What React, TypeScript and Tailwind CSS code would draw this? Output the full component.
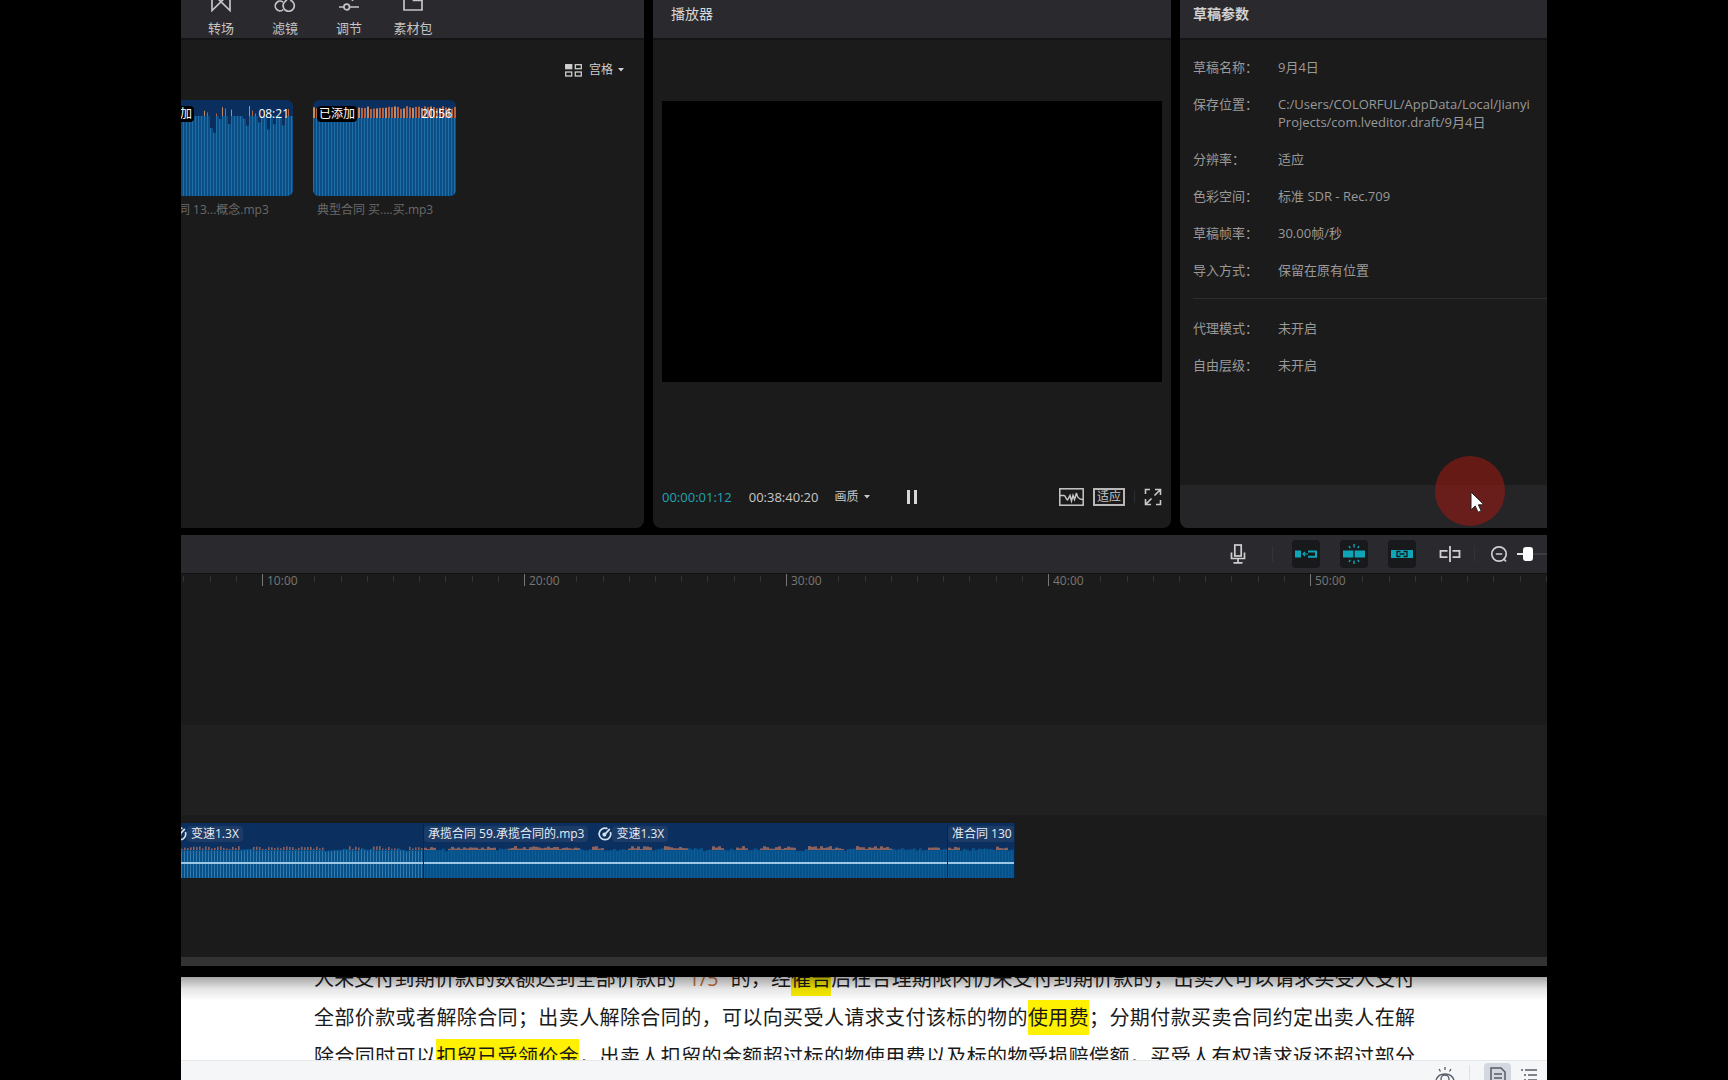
import React from 'react';

/** Draft settings listed in the right panel */
const draftInfo = [
  { label: '草稿名称：', value: ['9月4日'] },
  {
    label: '保存位置：',
    value: ['C:/Users/COLORFUL/AppData/Local/Jianyi', 'Projects/com.lveditor.draft/9月4日']
  },
  { label: '分辨率：', value: ['适应'] },
  { label: '色彩空间：', value: ['标准 SDR - Rec.709'] },
  { label: '草稿帧率：', value: ['30.00帧/秒'] },
  { label: '导入方式：', value: ['保留在原有位置'] }
];

const draftModes = [
  { label: '代理模式：', value: ['未开启'] },
  { label: '自由层级：', value: ['未开启'] }
];

const rulerMarks = ['00:00', '10:00', '20:00', '30:00', '40:00', '50:00'];

// Stable pseudo random value between 0 and 1
const noise = (n: number) => {
  const v = Math.sin(n * 12.9898 + 4.13) * 43758.5453;
  return v - Math.floor(v);
};

const Caret: React.FC = () => (
  <svg width="6" height="4" viewBox="0 0 6 4" fill="currentColor">
    <path d="M0 0h6L3 3.6z" />
  </svg>
);

interface ToolTabProps {
  label: string;
  children: React.ReactNode;
}

const ToolTab: React.FC<ToolTabProps> = ({ label, children }) => (
  <button className="flex w-16 flex-col items-center gap-[6px] text-[13px] leading-5 text-[#c4c4c6]">
    <svg width="22" height="22" viewBox="0 0 22 22" fill="none" stroke="currentColor" strokeWidth="1.7">
      {children}
    </svg>
    {label}
  </button>
);

interface MediaCardProps {
  title: string;
  duration: string;
  loud?: boolean;
  seed: number;
}

/**
 * Audio thumbnail: navy background, blue bars and clipped peaks in orange
 */
const MediaCard: React.FC<MediaCardProps> = ({ title, duration, loud, seed }) => (
  <div className="w-[143px] shrink-0">
    <div className="relative h-24 overflow-hidden rounded-md bg-[#0a2f5f]">
      <svg className="absolute inset-0" width="143" height="96" viewBox="0 0 143 96">
        {Array.from({ length: 48 }, (_, i) => {
          const r = noise(i + seed);
          const peak = loud ? 6 + r * 3 : r > 0.62 ? 5 + noise(i * 3 + seed) * 9 : 16;
          const top = loud ? 18 : r < 0.28 ? 18 + (0.28 - r) * 55 : 16;
          return (
            <g key={i}>
              {(loud || r > 0.62) && (
                <rect x={i * 3} y={peak} width={loud ? 2 : 1} height={20 - peak} fill={i % 3 ? '#b4623f' : '#c08a66'} />
              )}
              <rect x={i * 3} y={top} width="3" height={96 - top} fill="#0c4d84" />
              <rect x={i * 3} y={top} width="1" height={96 - top} fill="#1e6fa9" />
            </g>
          );
        })}
      </svg>
      <div className="relative flex items-center justify-between px-1 pt-[6px] text-[12px] leading-4 text-white">
        <span className="rounded-sm bg-black px-[2px]">已添加</span>
        <span>{duration}</span>
      </div>
    </div>
    <div className="px-1 pt-[5px] text-[12px] leading-[18px] text-[#6a6a6a]">{title}</div>
  </div>
);

const SpeedIcon: React.FC = () => (
  <svg className="shrink-0" width="14" height="14" viewBox="0 0 14 14" fill="none" stroke="#d5e0ee" strokeWidth="1.7" strokeLinecap="round">
    <path d="M8.8 1.4A5.8 5.8 0 1 0 12.6 5.6" />
    <path d="M6.6 7.6L11.4 2.4" />
    <circle cx="6.4" cy="7.6" r="1.2" fill="#d5e0ee" />
  </svg>
);

const ClipLabel: React.FC<{ children: React.ReactNode }> = ({ children }) => (
  <span className="shrink-0 whitespace-nowrap rounded-sm bg-[#1d3b67] px-1">{children}</span>
);

interface ClipProps {
  width: string;
  count: number;
  seed: number;
  striped?: boolean;
  children: React.ReactNode;
}

const Clip: React.FC<ClipProps> = ({ width, count, seed, striped, children }) => (
  <div className={`${width} h-[55px] shrink-0 overflow-hidden border-r border-[#0a2647] bg-[#0b2f5f]`}>
    <div className="flex h-[22px] items-center text-[12px] leading-4 text-[#e6edf5]">{children}</div>
    <svg className="block" width={count * 3} height="33" viewBox={`0 0 ${count * 3} 33`}>
      {Array.from({ length: count }, (_, i) => {
        const hot = noise(Math.floor(i / 4) + seed) > 0.35;
        const top = hot ? 5 : 3 + noise(i + seed) * 3;
        return (
          <g key={i}>
            {hot && <rect x={i * 3} y={1 + noise(i * 7 + seed) * 3} width={striped ? 1.6 : 3} height="6" fill="#8a6360" />}
            <rect x={i * 3} y={top} width="3" height={33 - top} fill="#07518a" />
            <rect x={i * 3} y={top + 1} width="1" height={33 - top} fill={striped ? '#3577a8' : '#0f5d97'} />
          </g>
        );
      })}
      <rect x="0" y="17" width={count * 3} height="2" fill="#9cc8e6" />
    </svg>
  </div>
);

const InfoRow: React.FC<{ label: string; value: string[] }> = ({ label, value }) => (
  <div className="flex">
    <dt className="w-[85px] shrink-0">{label}</dt>
    <dd className="whitespace-nowrap">
      {value.map((line) => (
        <div key={line}>{line}</div>
      ))}
    </dd>
  </div>
);

const Mark: React.FC<{ children: React.ReactNode }> = ({ children }) => (
  <mark className="bg-[#fff100] py-1 text-inherit">{children}</mark>
);

const MediaPanel: React.FC = () => (
  <section className="flex min-w-0 flex-col overflow-hidden rounded-br-lg bg-[#1b1b1b]">
    <div className="flex h-10 shrink-0 items-end overflow-hidden border-b-2 border-[#141415] bg-[#2a2a2e] pl-2">
      <ToolTab label="转场">
        <path d="M2 3v17.5L20 3v17.5L2 3" />
      </ToolTab>
      <ToolTab label="滤镜">
        <path d="M9 12.200A4.800 4.800 0 1 0 9.300 19.500" />
        <path d="M16.200 10.300A5.600 5.600 0 1 1 11.200 11.300L14.500 8" />
      </ToolTab>
      <ToolTab label="调节">
        <path d="M1 17h5M11.500 17H21M1 7.500h11M14.500 7v4" />
        <circle cx="8.700" cy="17" r="2.800" />
      </ToolTab>
      <ToolTab label="素材包">
        <path d="M2 3h9.500v7.500h8.500v9.500H2z" />
        <path d="M11.500 3h8.500v7.500" />
      </ToolTab>
    </div>
    <div className="flex justify-end px-5 pt-5">
      <button className="flex items-center text-[12px] leading-5 text-[#cfcfcf]">
        <svg width="17" height="13" viewBox="0 0 17 13" fill="none" stroke="currentColor" strokeWidth="1.3">
          <rect x="0.7" y="0.7" width="6" height="4" fill="currentColor" />
          <rect x="10.300" y="0.700" width="6" height="4" />
          <rect x="0.700" y="8" width="6" height="4" />
          <rect x="10.300" y="8" width="6" height="4" />
        </svg>
        <span className="mr-[5px] ml-[7px]">宫格</span>
        <Caret />
      </button>
    </div>
    <div className="-ml-[31px] flex gap-5 pt-5">
      <MediaCard title="准合同 13...概念.mp3" duration="08:21" seed={3} />
      <MediaCard title="典型合同 买....买.mp3" duration="20:56" seed={40} loud />
    </div>
  </section>
);

const PlayerPanel: React.FC = () => (
  <section className="flex min-w-0 flex-col overflow-hidden rounded-b-lg bg-[#1b1b1b]">
    <h2 className="h-10 shrink-0 border-b-2 border-[#141415] bg-[#2a2a2e] px-[18px] pt-1 text-[14px] leading-5 text-[#d6d6d8]">
      播放器
    </h2>
    <div className="mx-[9px] mt-[61px] h-[281px] bg-black" />
    <div className="grid grid-cols-[1fr_auto_1fr] items-center px-[9px] pt-[105px] pb-[21px] text-[13px] leading-5 text-[#c8c8c8]">
      <div className="flex items-center">
        <span className="text-[#1fa3b3]">00:00:01:12</span>
        <span className="ml-[17px]">00:38:40:20</span>
        <button className="ml-4 flex items-center gap-[6px] text-[12px]">
          画质
          <Caret />
        </button>
      </div>
      <button aria-label="暂停" className="flex gap-1">
        <span className="h-[14px] w-[3px] bg-[#d6d6d6]" />
        <span className="h-[14px] w-[3px] bg-[#d6d6d6]" />
      </button>
      <div className="flex items-center justify-end">
        <button aria-label="示波器">
          <svg width="25" height="18" viewBox="0 0 25 18" fill="none" stroke="currentColor" strokeWidth="1.5">
            <rect x="0.8" y="0.8" width="23.400" height="16.400" />
            <path d="M1 7.500h4c2 0 2 4.500 3.500 4.500L11 7.500l1.500 5.500 1.500-5.500 1.500 4L17.500 5c.5 4.500 2 6.500 6.500 6.500" />
          </svg>
        </button>
        <button className="ml-[9px] border-2 border-[#b8b8b8] px-[2px] text-[12px] leading-[14px]">适应</button>
        <span className="mx-[9px] h-3 w-px bg-[#2c2c2c]" />
        <button aria-label="全屏">
          <svg width="18" height="18" viewBox="0 0 18 18" fill="none" stroke="currentColor" strokeWidth="1.6">
            <path d="M1.500 6V1.500H6M11 1.500h5.500V7M16.500 12v4.500H12M7 16.500H1.500V11M16 2l-5.500 5.500M2 16l5.500-5.500" />
          </svg>
        </button>
      </div>
    </div>
  </section>
);

const DraftPanel: React.FC = () => (
  <section className="relative flex min-w-0 flex-col overflow-hidden rounded-bl-lg bg-[#1b1b1b]">
    <h2 className="h-10 shrink-0 border-b-2 border-[#141415] bg-[#2a2a2e] px-[13px] pt-1 text-[14px] leading-5 font-bold text-[#d0d0d2]">
      草稿参数
    </h2>
    <div className="flex-1 pl-[13px] pt-[18px] text-[13px] leading-[18px] text-[#999]">
      <dl className="flex flex-col gap-[19px]">
        {draftInfo.map((row) => (
          <InfoRow key={row.label} {...row} />
        ))}
      </dl>
      <hr className="mt-[19px] mb-5 border-[#2d2d2d]" />
      <dl className="flex flex-col gap-[19px]">
        {draftModes.map((row) => (
          <InfoRow key={row.label} {...row} />
        ))}
      </dl>
    </div>
    <div className="h-[43px] bg-[#252527]" />
    {/* Click highlight with the mouse pointer */}
    <div className="absolute right-[42px] bottom-[2px] size-[70px] rounded-full bg-[#991a14]/60">
      <svg className="absolute top-1/2 left-1/2" width="15" height="23" viewBox="0 0 15 23">
        <path d="M1 1v18l4.200-4 2.800 6.300 3.200-1.400-2.800-6.100H14z" fill="#fff" stroke="#222" strokeWidth="1" />
      </svg>
    </div>
  </section>
);

const TimelineToolbar: React.FC = () => (
  <div className="flex h-[39px] shrink-0 items-center justify-end border-b border-[#121214] bg-[#2a2a2e] text-[#cfcfd1]">
    <button aria-label="录音" className="flex size-7 items-center justify-center">
      <svg width="16" height="20" viewBox="0 0 16 20" fill="none" stroke="currentColor" strokeWidth="1.700">
        <rect x="4.800" y="1" width="6.400" height="11" />
        <path d="M1.500 8.500v6h13v-6M8 14.500v4M3.500 18.800h9" />
      </svg>
    </button>
    <span className="mr-[19px] ml-5 h-4 w-px bg-[#343438]" />
    <div className="flex gap-5">
      <button aria-label="主轨磁吸" className="flex size-7 items-center justify-center rounded bg-[#18191b] text-[#0ea5b7]">
        <svg width="22" height="10" viewBox="0 0 22 10" fill="none" stroke="currentColor" strokeWidth="1.600">
          <rect x="0" y="1.500" width="6" height="7" fill="currentColor" stroke="none" />
          <path d="M10 3L8 5l2 2M8 5h5" strokeWidth="1.200" />
          <path d="M13 2.500h8v5.200h-8" strokeWidth="2" />
        </svg>
      </button>
      <button aria-label="自动吸附" className="flex size-7 items-center justify-center rounded bg-[#18191b] text-[#0ea5b7]">
        <svg width="22" height="20" viewBox="0 0 22 20" fill="none" stroke="currentColor" strokeWidth="1.400">
          <path d="M0 6.500h10.300v7H0zM11.700 6.500h10.300v7H11.700z" fill="currentColor" stroke="none" />
          <path d="M11 0v3.500M11 16.500v3.500M6 2l1.200 2.200M16 2l-1.200 2.200M6 18l1.200-2.200M16 18l-1.200-2.200" />
        </svg>
      </button>
      <button aria-label="联动" className="flex size-7 items-center justify-center rounded bg-[#18191b] text-[#0ea5b7]">
        <svg width="22" height="10" viewBox="0 0 22 10" fill="none">
          <rect y="1" width="22" height="8" fill="currentColor" />
          <path d="M9.500 2.500H6v5h3.500M12.500 2.500H16v5h-3.500M8.500 5h5" stroke="#18191b" strokeWidth="1.300" />
        </svg>
      </button>
      <button aria-label="预览轴" className="flex size-7 items-center justify-center">
        <svg width="22" height="18" viewBox="0 0 22 18" fill="none" stroke="currentColor" strokeWidth="1.800">
          <path d="M8.500 5.800H1.500v6.400H8.500M13.500 5.800h7v6.400h-7M11 1v16" />
        </svg>
      </button>
    </div>
    <span className="mx-[10px] h-4 w-px bg-[#343438]" />
    <button aria-label="缩小" className="flex size-7 items-center justify-center">
      <svg width="18" height="18" viewBox="0 0 18 18" fill="none" stroke="currentColor" strokeWidth="1.700">
        <circle cx="9" cy="9" r="7.200" />
        <path d="M5.800 9h6.400M13.500 13.500l2.500 3" />
      </svg>
    </button>
    <div className="ml-1 flex h-5 w-[30px] items-center overflow-hidden">
      <input
        type="range"
        aria-label="时间线缩放"
        defaultValue={5}
        className="h-[2px] w-[130px] shrink-0 appearance-none bg-linear-to-r from-[#e4e4e4] from-10% to-[#3c3c40] to-10% [&::-webkit-slider-thumb]:h-[14px] [&::-webkit-slider-thumb]:w-[10px] [&::-webkit-slider-thumb]:appearance-none [&::-webkit-slider-thumb]:rounded-[3px] [&::-webkit-slider-thumb]:bg-white"
      />
    </div>
  </div>
);

const Timeline: React.FC = () => (
  <section className="flex flex-1 flex-col overflow-hidden bg-[#1b1b1b]">
    <TimelineToolbar />
    <div className="-ml-[181px] flex h-[151px] shrink-0">
      {rulerMarks.map((mark) => (
        <div key={mark} className="flex w-[262px] shrink-0">
          <div className="grid h-3 w-full grid-cols-10 text-[12px] leading-[14px] text-[#777]">
            <span className="h-3 border-l border-[#777] pl-1">{mark}</span>
            {Array.from({ length: 9 }, (_, i) => (
              <span key={i} className="mt-[2px] h-[6px] border-l border-[#333]" />
            ))}
          </div>
        </div>
      ))}
    </div>
    <div className="h-[90px] shrink-0 bg-[#202020]" />
    <div className="flex pt-2">
      <Clip width="w-[243px]" count={81} seed={11} striped>
        <div className="-ml-2 flex items-center">
          <SpeedIcon />
          <ClipLabel>变速1.3X</ClipLabel>
        </div>
      </Clip>
      <Clip width="w-[524px]" count={175} seed={52}>
        <ClipLabel>承揽合同 59.承揽合同的.mp3</ClipLabel>
        <div className="ml-[10px] flex items-center">
          <SpeedIcon />
          <ClipLabel>变速1.3X</ClipLabel>
        </div>
      </Clip>
      <Clip width="w-[67px]" count={23} seed={90}>
        <ClipLabel>准合同 130</ClipLabel>
      </Clip>
    </div>
    <div className="mt-auto h-[9px] bg-[#333]" />
  </section>
);

const DocumentWindow: React.FC = () => (
  <section className="mt-[11px] shrink-0 bg-white">
    <div className="relative h-[83px] overflow-hidden pr-[132px] pl-[133px]">
      <p className="-mt-[18px] text-[20px] leading-[39px] text-[#1a1a1a]">
        <span className="block text-justify whitespace-nowrap [text-align-last:justify]">
          人未支付到期价款的数额达到全部价款的<span className="px-[5px] text-[#c8743a]">“1/5”</span>的，经<Mark>催告</Mark>
          后在合理期限内仍未支付到期价款的，出卖人可以请求买受人支付
        </span>
        <span className="block text-justify whitespace-nowrap [text-align-last:justify]">
          全部价款或者解除合同；出卖人解除合同的，可以向买受人请求支付该标的物的<Mark>使用费</Mark>
          ；分期付款买卖合同约定出卖人在解
        </span>
        <span className="block text-justify whitespace-nowrap [text-align-last:justify]">
          除合同时可以<Mark>扣留已受领价金</Mark>
          ，出卖人扣留的金额超过标的物使用费以及标的物受损赔偿额，买受人有权请求返还超过部分
        </span>
      </p>
      <div className="absolute inset-x-0 top-0 h-6 bg-linear-to-b from-black/35 via-black/10 to-transparent" />
    </div>
    <div className="flex h-5 items-start justify-end overflow-hidden border-t border-[#e6e8ea] bg-[#f4f6f8] pr-[10px] text-[#555b66]">
      <button aria-label="护眼模式" className="pt-[6px]">
        <svg width="20" height="20" viewBox="0 0 20 20" fill="none" stroke="currentColor" strokeWidth="1.300">
          <path d="M1 13c3-8 15-8 18 0M10 0v3M4 2l1.500 2.500M16 2l-1.500 2.500" />
          <circle cx="10" cy="12" r="4" />
        </svg>
      </button>
      <span className="mx-[14px] mt-1 h-5 w-px bg-[#dde0e4]" />
      <button aria-label="页面视图" className="mt-[2px] flex h-7 w-[27px] justify-center rounded-sm bg-[#d3d8e0] pt-1">
        <svg width="16" height="18" viewBox="0 0 16 18" fill="none" stroke="currentColor" strokeWidth="1.500">
          <path d="M1 17V1h10l4 4v12M4 7h8M4 11h8" />
        </svg>
      </button>
      <button aria-label="大纲视图" className="pt-2 pl-[10px]">
        <svg width="16" height="14" viewBox="0 0 16 14" fill="none" stroke="currentColor" strokeWidth="1.300">
          <path d="M0 1h2M4 1h12M3 6h2M7 6h9M3 11h2M7 11h9" />
        </svg>
      </button>
    </div>
  </section>
);

/**
 * Video editor with the document window showing underneath
 */
const App: React.FC = () => (
  <main className="flex min-h-screen flex-col overflow-hidden bg-black px-[181px] font-['Open_Sans','Noto_Sans_CJK_SC',sans-serif]">
    <div className="mb-[7px] grid shrink-0 grid-cols-[463fr_518fr_367fr] gap-x-[9px]">
      <MediaPanel />
      <PlayerPanel />
      <DraftPanel />
    </div>
    <Timeline />
    <DocumentWindow />
  </main>
);

export default App;
